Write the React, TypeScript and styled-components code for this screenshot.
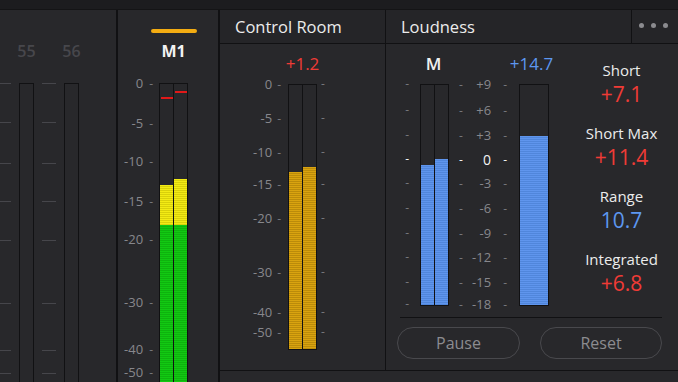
import React from "react";
import styled, { createGlobalStyle, css } from "styled-components";

const C = {
  page: "#1d1d20",
  panel: "#28282b",
  header: "#252528",
  line: "#111113",
  label: "#87878c",
  dash: "#77777c",
  white: "#ececec",
  red: "#f03b36",
  blue: "#5d97f0",
};

const stripes = (a: string, b: string) =>
  `repeating-linear-gradient(to bottom, ${a} 0px, ${a} 1px, ${b} 1px, ${b} 2px)`;

type FillKind = "green" | "yellow" | "gold" | "blue";
const FILLS: Record<FillKind, string> = {
  green: stripes("#12c912", "#0eb30e"),
  yellow: stripes("#f3eb14", "#d9d00a"),
  gold: stripes("#d9a30f", "#bb8b0a"),
  blue: stripes("#5f95ed", "#5086db"),
};

const GlobalStyle = createGlobalStyle`
  * { box-sizing: border-box; }
  html, body { margin: 0; padding: 0; background: ${C.page}; }
  body { font-family: "Open Sans", "DejaVu Sans", sans-serif; }
`;

const Screen = styled.div`
  width: 678px;
  height: 382px;
  overflow: hidden;
  background: ${C.page};
  display: flex;
  flex-direction: column;
`;

const TopStrip = styled.div`
  flex: none;
  height: 10px;
  background: #1c1c1f;
  border-bottom: 1px solid #141416;
`;

const Workspace = styled.div`
  flex: 1;
  min-height: 0;
  display: flex;
`;

/* ---------- meters ---------- */

const BarPair = styled.div<{ $h?: number }>`
  display: flex;
  height: ${(p) => (p.$h ? `${p.$h}px` : "100%")};
`;

const BarCell = styled.div<{ $w: number; $joined?: boolean; $open?: boolean }>`
  position: relative;
  flex: none;
  width: ${(p) => p.$w}px;
  height: 100%;
  border: 1px solid ${C.line};
  overflow: hidden;
  ${(p) => p.$joined && css`border-left: none;`}
  ${(p) => p.$open && css`border-bottom: none;`}
`;

const FillStack = styled.div`
  position: absolute;
  left: 0;
  right: 0;
  bottom: 0;
  display: flex;
  flex-direction: column;
`;

const FillSegment = styled.div<{ $kind: FillKind; $grow?: boolean }>`
  background: ${(p) => FILLS[p.$kind]};
  flex: ${(p) => (p.$grow ? "1 1 auto" : "none")};
`;

const PeakMark = styled.div`
  position: absolute;
  left: 1px;
  right: 0;
  height: 2px;
  background: #e01919;
`;

type BarSpec = { w: number; top: number; kind: FillKind; split?: number; peak?: number };

function MeterBar({ spec, joined, open }: { spec: BarSpec; joined?: boolean; open?: boolean }) {
  return (
    <BarCell $w={spec.w} $joined={joined} $open={open}>
      <FillStack style={{ top: spec.top }}>
        {spec.split !== undefined && (
          <FillSegment $kind="yellow" style={{ height: spec.split - spec.top }} />
        )}
        <FillSegment $kind={spec.kind} $grow />
      </FillStack>
      {spec.peak !== undefined && <PeakMark style={{ top: spec.peak }} />}
    </BarCell>
  );
}

const ScaleCol = styled.div<{ $col?: number }>`
  position: relative;
  height: 100%;
  ${(p) => p.$col && css`grid-column: ${p.$col};`}
  grid-row: 2;
`;

const ScaleMark = styled.div<{ $right: number; $gap: number; $bright?: boolean }>`
  position: absolute;
  right: ${(p) => p.$right}px;
  transform: translateY(-50%);
  display: flex;
  align-items: center;
  gap: ${(p) => p.$gap}px;
  font-size: 13px;
  line-height: 15px;
  white-space: nowrap;
  color: ${(p) => (p.$bright ? "#f4f4f4" : C.label)};
`;

const SideMark = styled.div<{ $left?: number; $right?: number; $bright?: boolean }>`
  position: absolute;
  ${(p) => (p.$left !== undefined ? css`left: ${p.$left}px;` : css`right: ${p.$right}px;`)}
  transform: translateY(-50%);
  font-size: 12px;
  line-height: 14px;
  color: ${(p) => (p.$bright ? "#f4f4f4" : C.dash)};
`;

const MidMark = styled.div<{ $bright?: boolean }>`
  position: absolute;
  left: 10px;
  right: 12px;
  transform: translateY(-50%);
  display: flex;
  align-items: center;
  font-size: 12px;
  line-height: 15px;
  color: ${(p) => (p.$bright ? "#f4f4f4" : C.label)};
`;

const MidLabel = styled.span<{ $bright?: boolean }>`
  flex: 1;
  text-align: right;
  padding-right: 12px;
  font-size: ${(p) => (p.$bright ? "14px" : "13px")};
`;

const Dash = styled.span<{ $bright?: boolean }>`
  font-size: 12px;
  color: ${(p) => (p.$bright ? "#f4f4f4" : C.dash)};
`;

/* ---------- channel strips ---------- */

const ChannelsPanel = styled.div`
  width: 118px;
  flex: none;
  background: ${C.panel};
  border-right: 2px solid ${C.line};
  display: flex;
  overflow: hidden;
`;

const ChannelStrip = styled.div`
  flex: none;
  display: grid;
  grid-template-columns: 14px 15px;
  grid-template-rows: 73px 1fr;
  column-gap: 8px;
  padding-right: 8px;
  &:first-child {
    margin-left: -3px;
  }
`;

const ChannelNumber = styled.div`
  grid-column: 2;
  grid-row: 1;
  justify-self: center;
  padding-top: 31px;
  font-size: 16px;
  line-height: 20px;
  font-weight: 600;
  color: #47474c;
  white-space: nowrap;
`;

const TickLine = styled.div`
  position: absolute;
  left: 0;
  right: 0;
  height: 1px;
  background: #46464b;
`;

const BarSlot = styled.div<{ $col: number }>`
  grid-column: ${(p) => p.$col};
  grid-row: 2;
  min-height: 0;
`;

/* ---------- M1 ---------- */

const TrackPanel = styled.div`
  width: 102px;
  flex: none;
  background: ${C.panel};
  border-right: 2px solid ${C.line};
  display: grid;
  grid-template-columns: 41px 29px 1fr;
  grid-template-rows: 73px 1fr;
  overflow: hidden;
`;

const TrackHead = styled.div`
  grid-column: 1 / -1;
  grid-row: 1;
  display: flex;
  flex-direction: column;
  align-items: center;
  padding: 19px 0 0 11px;
`;

const AssignBar = styled.div`
  width: 46px;
  height: 4px;
  border-radius: 2px;
  background: #f3ac12;
`;

const TrackName = styled.div`
  margin-top: 8px;
  font-size: 16px;
  line-height: 20px;
  font-weight: 700;
  color: #f2f2f2;
`;

/* ---------- right panels ---------- */

const RightArea = styled.div`
  flex: 1;
  min-width: 0;
  display: flex;
  flex-direction: column;
`;

const PanelsRow = styled.div`
  flex: none;
  height: 360px;
  display: flex;
`;

const Footer = styled.div`
  flex: 1;
  background: ${C.panel};
  border-top: 1px solid ${C.line};
`;

const Panel = styled.div<{ $w?: number }>`
  ${(p) => (p.$w ? css`width: ${p.$w}px; flex: none;` : css`flex: 1; min-width: 0;`)}
  background: ${C.panel};
  border-right: 1px solid ${C.line};
  display: flex;
  flex-direction: column;
  &:last-child {
    border-right: none;
  }
`;

const PanelHeader = styled.div`
  flex: none;
  height: 34px;
  display: flex;
  align-items: stretch;
  background: ${C.header};
  border-bottom: 1px solid ${C.line};
`;

const PanelTitle = styled.div`
  flex: 1;
  display: flex;
  align-items: center;
  padding-left: 15px;
  font-size: 16.5px;
  color: ${C.white};
`;

const MoreButton = styled.div`
  width: 47px;
  flex: none;
  border-left: 1px solid ${C.line};
  display: flex;
  align-items: center;
  justify-content: center;
  gap: 7px;
  padding: 0 4px 3px 0;
`;

const Dot = styled.span`
  width: 5px;
  height: 5px;
  border-radius: 50%;
  background: #8b8b8f;
`;

const MeterGrid = styled.div<{ $cols: string; $rows: string }>`
  display: grid;
  grid-template-columns: ${(p) => p.$cols};
  grid-template-rows: ${(p) => p.$rows};
`;

const Reading = styled.div<{ $col: number; $tone: "red" | "blue" | "white"; $nudge?: number }>`
  grid-column: ${(p) => p.$col};
  grid-row: 1;
  justify-self: center;
  align-self: center;
  white-space: nowrap;
  font-size: 17px;
  line-height: 20px;
  margin-right: ${(p) => p.$nudge ?? 0}px;
  font-weight: ${(p) => (p.$tone === "white" ? 600 : 400)};
  color: ${(p) => (p.$tone === "red" ? C.red : p.$tone === "blue" ? C.blue : "#f0f0f0")};
`;

const MeterSlot = styled.div<{ $col: number }>`
  grid-column: ${(p) => p.$col};
  grid-row: 2;
`;

/* loudness */

const LoudnessBody = styled.div`
  flex: 1;
  display: flex;
  flex-direction: column;
`;

const LoudnessTop = styled.div`
  display: flex;
`;

const Stats = styled.div`
  flex: 1;
  display: flex;
  flex-direction: column;
  align-items: center;
  gap: 18px;
  padding: 17px 0 0 16px;
`;

const Stat = styled.div`
  display: flex;
  flex-direction: column;
  align-items: center;
  gap: 3px;
`;

const StatLabel = styled.div`
  font-size: 15px;
  line-height: 18px;
  color: ${C.white};
  white-space: nowrap;
`;

const StatValue = styled.div<{ $tone: "red" | "blue" }>`
  font-size: 21px;
  line-height: 24px;
  color: ${(p) => (p.$tone === "red" ? C.red : C.blue)};
`;

const Divider = styled.div`
  height: 1px;
  margin: 11px 16px 0 14px;
  background: ${C.line};
`;

const ButtonRow = styled.div`
  display: flex;
  gap: 20px;
  padding-left: 11px;
  margin-top: 9px;
`;

const PillButton = styled.button<{ $w: number }>`
  width: ${(p) => p.$w}px;
  height: 32px;
  border: 1.5px solid #49494d;
  border-radius: 16px;
  background: transparent;
  color: #8c8c90;
  font-family: "Open Sans", "DejaVu Sans", sans-serif;
  font-size: 16px;
  padding: 0;
`;

/* ---------- data ---------- */

const M1_SCALE: [string, number][] = [
  ["0", 0],
  ["-5", 40],
  ["-10", 78],
  ["-15", 118],
  ["-20", 156],
  ["-30", 219],
  ["-40", 266],
  ["-50", 289],
];

const CHANNEL_TICKS = [0, 39, 80, 118, 157, 220, 267, 290];

const CR_SCALE: [string, number][] = [
  ["0", 0],
  ["-5", 34],
  ["-10", 68],
  ["-15", 100],
  ["-20", 134],
  ["-30", 188],
  ["-40", 228],
  ["-50", 248],
];

const LU_SCALE: [string, number][] = [
  ["+9", 0],
  ["+6", 26],
  ["+3", 51],
  ["0", 75],
  ["-3", 99],
  ["-6", 124],
  ["-9", 149],
  ["-12", 173],
  ["-15", 198],
  ["-18", 220],
];

const STATS: { label: string; value: string; tone: "red" | "blue" }[] = [
  { label: "Short", value: "+7.1", tone: "red" },
  { label: "Short Max", value: "+11.4", tone: "red" },
  { label: "Range", value: "10.7", tone: "blue" },
  { label: "Integrated", value: "+6.8", tone: "red" },
];

function Channel({ n }: { n: number }) {
  return (
    <ChannelStrip>
      <ChannelNumber>{n}</ChannelNumber>
      <ScaleCol $col={1}>
        {CHANNEL_TICKS.map((t) => (
          <TickLine key={t} style={{ top: t }} />
        ))}
      </ScaleCol>
      <BarSlot $col={2}>
        <BarCell $w={15} $open />
      </BarSlot>
    </ChannelStrip>
  );
}

export default function App() {
  return (
    <>
      <GlobalStyle />
      <Screen>
        <TopStrip />
        <Workspace>
          <ChannelsPanel>
            <Channel n={55} />
            <Channel n={56} />
          </ChannelsPanel>

          <TrackPanel>
            <TrackHead>
              <AssignBar />
              <TrackName>M1</TrackName>
            </TrackHead>
            <ScaleCol $col={1}>
              {M1_SCALE.map(([l, t]) => (
                <ScaleMark key={l} $right={6} $gap={6} style={{ top: t }}>
                  <span>{l}</span>
                  <Dash>-</Dash>
                </ScaleMark>
              ))}
            </ScaleCol>
            <MeterSlot $col={2}>
              <BarPair>
                <MeterBar open spec={{ w: 15, top: 101, split: 141, kind: "green", peak: 13 }} />
                <MeterBar open joined spec={{ w: 14, top: 95, split: 141, kind: "green", peak: 7 }} />
              </BarPair>
            </MeterSlot>
          </TrackPanel>

          <RightArea>
            <PanelsRow>
              <Panel $w={166}>
                <PanelHeader>
                  <PanelTitle>Control Room</PanelTitle>
                </PanelHeader>
                <MeterGrid $cols="68px 29px 1fr" $rows="40px 266px">
                  <Reading $col={2} $tone="red">
                    +1.2
                  </Reading>
                  <ScaleCol $col={1}>
                    {CR_SCALE.map(([l, t]) => (
                      <ScaleMark key={l} $right={7} $gap={5} style={{ top: t }}>
                        <span>{l}</span>
                        <Dash>-</Dash>
                      </ScaleMark>
                    ))}
                  </ScaleCol>
                  <MeterSlot $col={2}>
                    <BarPair>
                      <MeterBar spec={{ w: 15, top: 87, kind: "gold" }} />
                      <MeterBar joined spec={{ w: 14, top: 82, kind: "gold" }} />
                    </BarPair>
                  </MeterSlot>
                  <ScaleCol $col={3}>
                    {CR_SCALE.map(([l, t]) => (
                      <SideMark key={l} $left={4} style={{ top: t }}>
                        -
                      </SideMark>
                    ))}
                  </ScaleCol>
                </MeterGrid>
              </Panel>

              <Panel>
                <PanelHeader>
                  <PanelTitle>Loudness</PanelTitle>
                  <MoreButton>
                    <Dot />
                    <Dot />
                    <Dot />
                  </MoreButton>
                </PanelHeader>
                <LoudnessBody>
                  <LoudnessTop>
                    <MeterGrid $cols="34px 29px 70px 30px" $rows="40px 222px">
                      <Reading $col={2} $tone="white" $nudge={2}>
                        M
                      </Reading>
                      <Reading $col={4} $tone="blue" $nudge={5}>
                        +14.7
                      </Reading>
                      <ScaleCol $col={1}>
                        {LU_SCALE.map(([l, t]) => (
                          <SideMark key={l} $right={11} $bright={l === "0"} style={{ top: t }}>
                            -
                          </SideMark>
                        ))}
                      </ScaleCol>
                      <MeterSlot $col={2}>
                        <BarPair>
                          <MeterBar spec={{ w: 15, top: 80, kind: "blue" }} />
                          <MeterBar joined spec={{ w: 14, top: 74, kind: "blue" }} />
                        </BarPair>
                      </MeterSlot>
                      <ScaleCol $col={3}>
                        {LU_SCALE.map(([l, t]) => {
                          const bright = l === "0";
                          return (
                            <MidMark key={l} $bright={bright} style={{ top: t }}>
                              <Dash $bright={bright}>-</Dash>
                              <MidLabel $bright={bright}>{l}</MidLabel>
                              <Dash $bright={bright}>-</Dash>
                            </MidMark>
                          );
                        })}
                      </ScaleCol>
                      <MeterSlot $col={4}>
                        <BarPair>
                          <MeterBar spec={{ w: 30, top: 51, kind: "blue" }} />
                        </BarPair>
                      </MeterSlot>
                    </MeterGrid>
                    <Stats>
                      {STATS.map((s) => (
                        <Stat key={s.label}>
                          <StatLabel>{s.label}</StatLabel>
                          <StatValue $tone={s.tone}>{s.value}</StatValue>
                        </Stat>
                      ))}
                    </Stats>
                  </LoudnessTop>
                  <Divider />
                  <ButtonRow>
                    <PillButton $w={123}>Pause</PillButton>
                    <PillButton $w={122}>Reset</PillButton>
                  </ButtonRow>
                </LoudnessBody>
              </Panel>
            </PanelsRow>
            <Footer />
          </RightArea>
        </Workspace>
      </Screen>
    </>
  );
}
